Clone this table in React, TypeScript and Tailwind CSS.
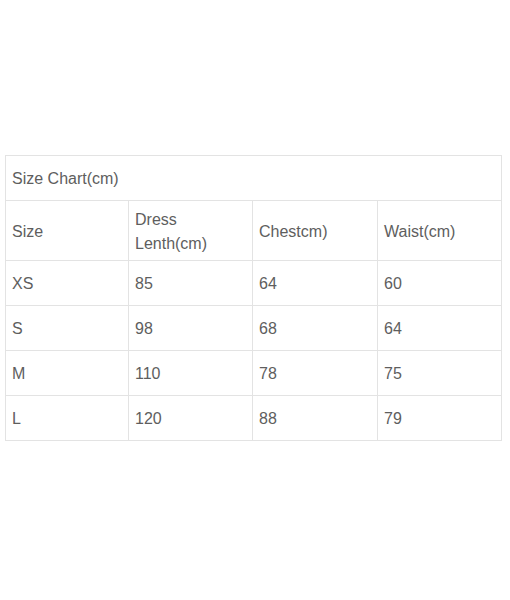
const rows = [
  ['XS', '85', '64', '60'],
  ['S', '98', '68', '64'],
  ['M', '110', '78', '75'],
  ['L', '120', '88', '79'],
];

const cell = 'border border-[#e3e3e3] px-[6px] pt-[2px] align-middle text-left font-normal';

export default function App() {
  return (
    <div className="min-h-[600px] w-[510px] bg-white pl-[5px] pt-[155px] font-['Liberation_Sans',Arial,sans-serif] text-[16px] text-[#5e5e5e]">
      <table className="w-[497px] table-fixed border-collapse">
        <colgroup>
          <col className="w-[123px]" />
          <col className="w-[124px]" />
          <col className="w-[125px]" />
          <col className="w-[124px]" />
        </colgroup>
        <tbody>
          <tr className="h-[45px]">
            <td colSpan={4} className={cell}>Size Chart(cm)</td>
          </tr>
          <tr className="h-[60px]">
            <td className={cell}>Size</td>
            <td className={cell + ' leading-[24px]'}>
              Dress
              <br />
              Lenth(cm)
            </td>
            <td className={cell}>Chestcm)</td>
            <td className={cell}>Waist(cm)</td>
          </tr>
          {rows.map(r => (
            <tr key={r[0]} className="h-[45px]">
              {r.map((v, i) => (
                <td key={i} className={cell}>{v}</td>
              ))}
            </tr>
          ))}
        </tbody>
      </table>
    </div>
  );
}
